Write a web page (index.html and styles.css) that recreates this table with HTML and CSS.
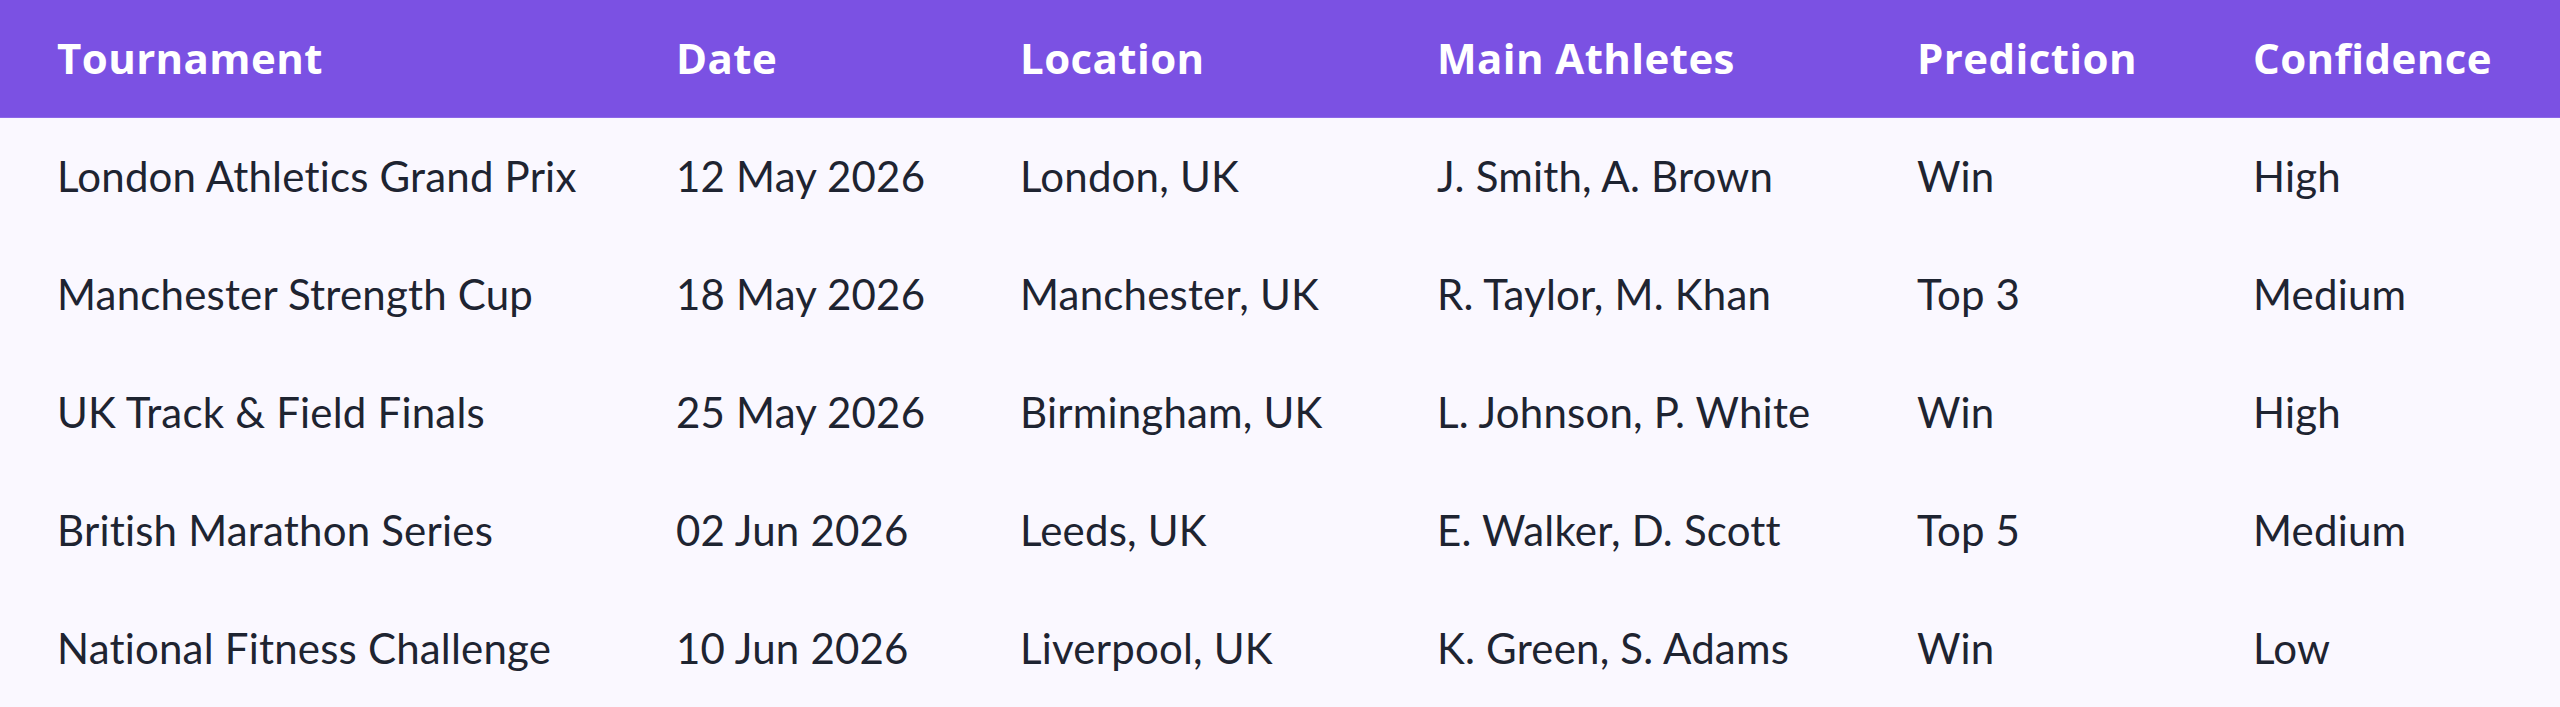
FILE: index.html
```html
<!DOCTYPE html>
<html lang="en">
<head>
<meta charset="utf-8">
<title>Tournament Predictions</title>
<link rel="stylesheet" href="styles.css">
</head>
<body>
<table class="predictions">
  <colgroup>
    <col class="col-tournament">
    <col class="col-date">
    <col class="col-location">
    <col class="col-athletes">
    <col class="col-prediction">
    <col class="col-confidence">
  </colgroup>
  <thead>
    <tr>
      <th>Tournament</th>
      <th>Date</th>
      <th>Location</th>
      <th>Main Athletes</th>
      <th>Prediction</th>
      <th>Confidence</th>
    </tr>
  </thead>
  <tbody>
    <tr>
      <td>London Athletics Grand Prix</td>
      <td>12 May 2026</td>
      <td>London, UK</td>
      <td>J. Smith, A. Brown</td>
      <td>Win</td>
      <td>High</td>
    </tr>
    <tr>
      <td>Manchester Strength Cup</td>
      <td>18 May 2026</td>
      <td>Manchester, UK</td>
      <td>R. Taylor, M. Khan</td>
      <td>Top 3</td>
      <td>Medium</td>
    </tr>
    <tr>
      <td>UK Track &amp; Field Finals</td>
      <td>25 May 2026</td>
      <td>Birmingham, UK</td>
      <td>L. Johnson, P. White</td>
      <td>Win</td>
      <td>High</td>
    </tr>
    <tr>
      <td>British Marathon Series</td>
      <td>02 Jun 2026</td>
      <td>Leeds, UK</td>
      <td>E. Walker, D. Scott</td>
      <td>Top 5</td>
      <td>Medium</td>
    </tr>
    <tr>
      <td>National Fitness Challenge</td>
      <td>10 Jun 2026</td>
      <td>Liverpool, UK</td>
      <td>K. Green, S. Adams</td>
      <td>Win</td>
      <td>Low</td>
    </tr>
  </tbody>
</table>
</body>
</html>
```
FILE: styles.css
```css
html, body {
  margin: 0;
  padding: 0;
  background: #faf8ff;
}

.predictions {
  width: 2560px;
  table-layout: fixed;
  border-collapse: collapse;
  border-spacing: 0;
  font-family: Lato, "Open Sans", "Liberation Sans", sans-serif;
  color: #1e2431;
}

.col-tournament { width: 619px; }
.col-date { width: 344px; }
.col-location { width: 417px; }
.col-athletes { width: 480px; }
.col-prediction { width: 336px; }
.col-confidence { width: 364px; }

.predictions thead tr {
  background: #7b51e3;
  height: 117px;
}

.predictions th {
  padding: 0 0 0 57px;
  text-align: left;
  vertical-align: middle;
  font-family: "Open Sans", Lato, sans-serif;
  font-weight: 700;
  font-size: 42px;
  letter-spacing: 0.4px;
  line-height: 1;
  color: #ffffff;
  border-bottom: 1px solid #8c67e8;
  white-space: nowrap;
}

.predictions tbody tr {
  height: 118px;
}

.predictions td {
  padding: 0 0 0 57px;
  vertical-align: middle;
  font-size: 42px;
  font-weight: 400;
  letter-spacing: 0.2px;
  line-height: 1;
  white-space: nowrap;
}
```
